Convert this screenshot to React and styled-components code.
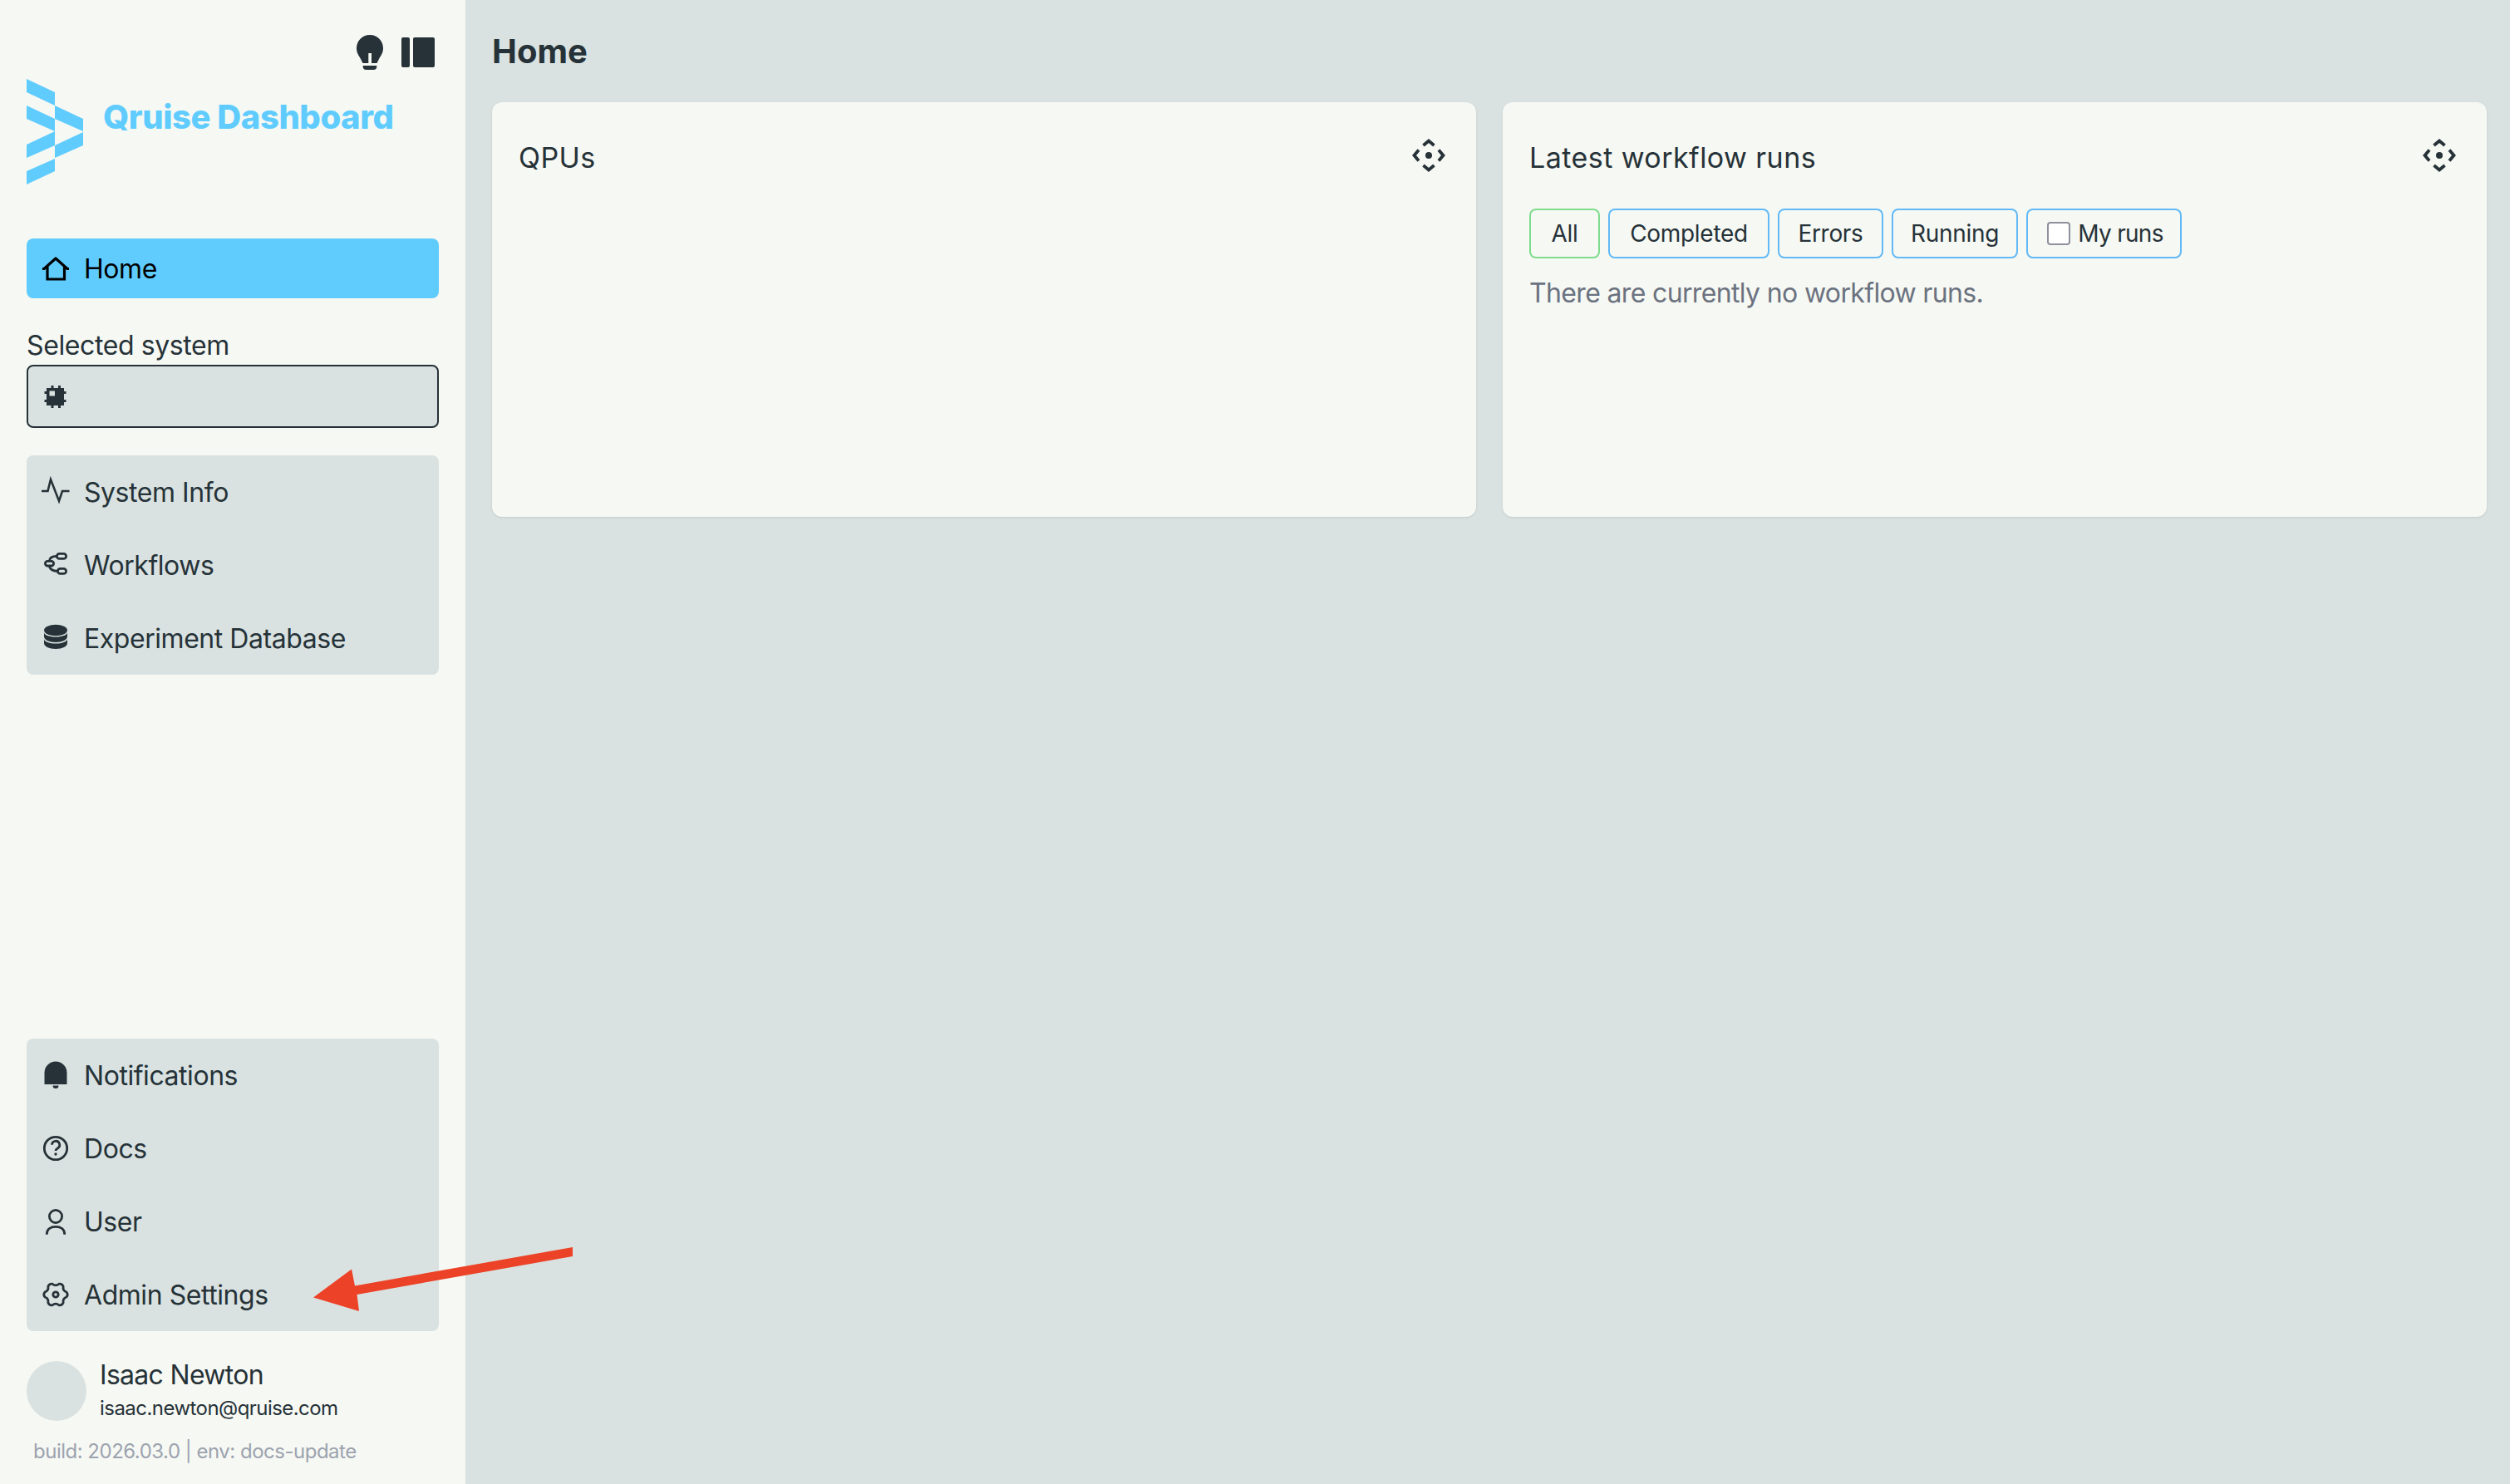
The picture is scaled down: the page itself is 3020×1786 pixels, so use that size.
import React from 'react'
import styled, { createGlobalStyle } from 'styled-components'

const ink = '#263238'
const sky = '#60ccfe'
const mist = '#d9e2e1'
const paper = '#f6f8f3'

const GlobalStyle = createGlobalStyle`
  html, body {
    margin: 0;
    padding: 0;
    background: ${mist};
  }
  body {
    font-family: Inter, 'Liberation Sans', sans-serif;
    color: ${ink};
  }
  * {
    box-sizing: border-box;
  }
`

const Page = styled.div`
  position: relative;
  display: flex;
  width: 3020px;
  height: 1786px;
  overflow: hidden;
`

const Sidebar = styled.aside`
  display: flex;
  flex-direction: column;
  flex: 0 0 560px;
  padding: 42px 32px 23px;
  background: ${paper};
`

const TopIcons = styled.div`
  display: flex;
  justify-content: flex-end;
  align-items: center;
  gap: 22px;
  height: 42px;
  padding-right: 5px;
`

const Brand = styled.div`
  display: flex;
  gap: 24px;
  margin-top: 11px;
`

const BrandName = styled.span`
  margin-top: 22px;
  font-size: 40px;
  line-height: 48px;
  font-weight: 800;
  letter-spacing: -0.45px;
  color: ${sky};
`

const NavRow = styled.div`
  display: flex;
  align-items: center;
  gap: 14px;
  height: ${(p) => (p.$active ? 72 : 88)}px;
  padding-left: 15px;
  font-size: 32px;
  letter-spacing: -0.45px;
  color: ${(p) => (p.$active ? '#000' : ink)};
  background: ${(p) => (p.$active ? sky : 'transparent')};
  border-radius: ${(p) => (p.$active ? '8px' : '0')};
`

const HomeSlot = styled.div`
  margin-top: 65px;
`

const Label = styled.div`
  margin-top: 37px;
  font-size: 32px;
  line-height: 40px;
  letter-spacing: -0.4px;
`

const SystemSelect = styled.div`
  display: flex;
  align-items: center;
  height: 76px;
  margin-top: 3px;
  padding-left: 15px;
  background: ${mist};
  border: 2px solid ${ink};
  border-radius: 8px;
  svg {
    margin-left: -2px;
  }
`

const NavGroup = styled.nav`
  margin-top: ${(p) => (p.$bottom ? 'auto' : '33px')};
  background: ${mist};
  border-radius: 8px;
`

const UserCard = styled.div`
  display: flex;
  gap: 16px;
  margin-top: 36px;
`

const Avatar = styled.div`
  flex: 0 0 72px;
  height: 72px;
  border-radius: 50%;
  background: ${mist};
`

const UserName = styled.div`
  font-size: 32px;
  line-height: 40px;
  margin-top: -3px;
  letter-spacing: -0.7px;
`

const UserMail = styled.div`
  margin-top: 1px;
  font-size: 24px;
  line-height: 38px;
  letter-spacing: -0.55px;
`

const BuildInfo = styled.div`
  margin-top: 17px;
  padding-left: 8px;
  font-size: 24px;
  line-height: 32px;
  letter-spacing: -0.5px;
  color: #9ca3af;
`

const Main = styled.main`
  flex: 1;
  padding: 38px 28px 0 32px;
`

const PageTitle = styled.h1`
  margin: 0 0 37px;
  font-size: 40px;
  line-height: 48px;
  font-weight: 700;
`

const Cards = styled.div`
  display: grid;
  grid-template-columns: 1fr 1fr;
  gap: 32px;
`

const Card = styled.section`
  height: 499px;
  padding: 44px 32px 0;
  background: ${paper};
  border-radius: 12px;
  box-shadow: 0 1px 3px rgba(0, 0, 0, 0.1);
`

const CardHead = styled.div`
  display: flex;
  justify-content: space-between;
  align-items: center;
  height: 44px;
  padding-right: 5px;
  svg {
    margin-top: -4px;
  }
`

const CardTitle = styled.h2`
  margin: 0;
  font-size: 34px;
  font-weight: 400;
  letter-spacing: 0.45px;
`

const Filters = styled.div`
  display: flex;
  gap: 10px;
  margin-top: 40px;
`

const Filter = styled.button`
  display: flex;
  justify-content: center;
  align-items: center;
  gap: 9px;
  width: ${(p) => p.$w}px;
  height: 60px;
  padding: 0;
  font: inherit;
  font-size: 28px;
  letter-spacing: -0.3px;
  color: ${ink};
  background: transparent;
  border: 2px solid ${(p) => (p.$active ? '#7fdc8d' : '#62b9f5')};
  border-radius: 8px;
`

const Check = styled.span`
  width: 28px;
  height: 28px;
  margin-left: 3px;
  background: #fff;
  border: 2px solid #8f8f9d;
  border-radius: 4px;
`

const MyRuns = styled.span`
  letter-spacing: -0.7px;
`

const Empty = styled.p`
  margin: 18px 0 0;
  font-size: 32px;
  line-height: 48px;
  letter-spacing: -0.65px;
  color: #6b7280;
`

const Pointer = styled.svg`
  position: absolute;
  left: 370px;
  top: 1495px;
`

const Icon = ({ children, fill = 'none', stroke = 'currentColor', width = 3 }) => (
  <svg width='40' height='40' viewBox='0 0 40 40' fill={fill} stroke={stroke} strokeWidth={width} style={{ flex: 'none' }}>
    {children}
  </svg>
)

const HomeIcon = () => (
  <Icon width={3.2}>
    <path d='M4 20.5h2L20 8l14 12.5h2' strokeLinejoin='round' />
    <path d='M10 18v15h20.5V18' />
  </Icon>
)

const ChipIcon = () => (
  <Icon fill={ink} stroke='none'>
    <path d='M9 10h21v21H9z' />
    <path d='M14.5 7h3v3h-3zM23 7h3v3h-3zM14.5 31h3v3h-3zM23 31h3v3h-3zM6.5 14h2.5v3H6.5zM30 14h2.5v3H30zM6.5 24h2.5v3H6.5zM30 24h2.5v3H30z' />
    <path d='M12.5 13.5H19v6h-6.5z' fill={mist} />
  </Icon>
)

const ActivityIcon = () => (
  <Icon width={2.6}>
    <path d='M3 19h7.5L14 5l10 26 4-12h8.5' />
  </Icon>
)

const FlowIcon = () => (
  <Icon width={2.8}>
    <rect x='7.4' y='15.4' width='10.2' height='5.6' rx='2.8' />
    <rect x='21.4' y='6.4' width='11.2' height='6' rx='3' />
    <rect x='22.4' y='24.4' width='10.2' height='6' rx='3' />
    <path d='M12.5 15.4C12.5 11 16 9.4 21.4 9.4M12.5 21c0 4 4.5 6.4 9.9 6.4' />
  </Icon>
)

const DatabaseIcon = () => (
  <Icon fill={ink} stroke='none'>
    <ellipse cx='20' cy='10.5' rx='14' ry='6.8' />
    <path d='M6 13v5c0 4 6 7 14 7s14-3 14-7v-5c0 3.500-7 5.500-14 5.500S6 16.500 6 13z' />
    <path d='M6 21v5c0 4 6 7 14 7s14-3 14-7v-5c0 3.500-7 5.500-14 5.500S6 24.500 6 21z' />
  </Icon>
)

const BellIcon = () => (
  <Icon fill={ink} stroke='none'>
    <path d='M6.500 31V17a13.500 13.500 0 0 1 27 0v14z' />
    <path d='M16.500 32.500h7a3.500 3.500 0 0 1-7 0z' />
  </Icon>
)

const HelpIcon = () => (
  <Icon width={2.8}>
    <circle cx='20' cy='20' r='13.700' />
    <path d='M15.500 15.800a4.600 4.600 0 1 1 6.800 4.100c-1.400.8-2.300 1.500-2.300 3.100' />
    <circle cx='20' cy='27' r='1.700' fill={ink} stroke='none' />
  </Icon>
)

const UserIcon = () => (
  <Icon width={2.8}>
    <circle cx='20' cy='14' r='7.600' />
    <path d='M9.200 35.700C9.200 29 14 26.300 20 26.300s10.800 2.700 10.800 9.400' />
  </Icon>
)

// six lobes, one every 60deg
const gearPath = () => {
  const at = (deg, r) => {
    const a = (deg * Math.PI) / 180
    return `${(20 + r * Math.cos(a)).toFixed(2)} ${(20 + r * Math.sin(a)).toFixed(2)}`
  }
  let d = `M${at(-13, 13.4)}`
  for (let i = 0; i < 6; i++) {
    const a = i * 60
    d += ` Q${at(a, 15.4)} ${at(a + 13, 13.4)} Q${at(a + 30, 9.4)} ${at(a + 47, 13.4)}`
  }
  return d + 'Z'
}

const GearIcon = () => (
  <Icon width={2.8}>
    <path d={gearPath()} strokeLinejoin='round' />
    <circle cx='20' cy='20' r='3.200' />
  </Icon>
)

const MoveIcon = () => (
  <Icon width={3.8}>
    <path d='M13.500 8L20 2.500 26.500 8M13.500 32l6.500 5.500L26.500 32M8 13.500L2.500 20 8 26.500M32 13.500l5.500 6.500L32 26.500' />
    <circle cx='20' cy='20' r='4' fill={ink} stroke='none' />
  </Icon>
)

const Logo = () => (
  <svg width='68' height='127' viewBox='32 95 68 127' fill={sky}>
    <path d='M32 95l34 16v16l-34-16z' />
    <path d='M32 127l34 16v15l-34-15z' />
    <path d='M66 127l34 16v15l-34-15z' />
    <path d='M66 158l-34 16v16l34-15z' />
    <path d='M100 159l-34 16v15l34-15z' />
    <path d='M66 191l-34 15v16l34-16z' />
  </svg>
)

const Bulb = () => (
  <svg width='32' height='42' viewBox='0 0 32 42' fill={ink}>
    <path d='M16 0C7 0 0 7 0 16c0 6 3 9 5 13l2.500 5h6.800V22H18v12h6.500l2.500-5c2-4 5-7 5-13 0-9-7-16-16-16z' />
    <path d='M7.700 37h16.600v1a4 4 0 0 1-4 4h-8.600a4 4 0 0 1-4-4z' />
  </svg>
)

const PanelIcon = () => (
  <svg width='40' height='36' viewBox='0 0 40 36' fill={ink}>
    <rect width='10' height='36' rx='2' />
    <rect x='14' width='26' height='36' rx='2' />
  </svg>
)

const topNav = [
  { label: 'System Info', icon: <ActivityIcon /> },
  { label: 'Workflows', icon: <FlowIcon /> },
  { label: 'Experiment Database', icon: <DatabaseIcon /> },
]

const bottomNav = [
  { label: 'Notifications', icon: <BellIcon /> },
  { label: 'Docs', icon: <HelpIcon /> },
  { label: 'User', icon: <UserIcon /> },
  { label: 'Admin Settings', icon: <GearIcon /> },
]

const App = () => {
  return (
    <Page>
      <GlobalStyle />
      <Sidebar>
        <TopIcons>
          <Bulb />
          <PanelIcon />
        </TopIcons>
        <Brand>
          <Logo />
          <BrandName>Qruise Dashboard</BrandName>
        </Brand>
        <HomeSlot>
          <NavRow $active>
            <HomeIcon />
            Home
          </NavRow>
        </HomeSlot>
        <Label>Selected system</Label>
        <SystemSelect>
          <ChipIcon />
        </SystemSelect>
        <NavGroup>
          {topNav.map((item) => (
            <NavRow key={item.label}>
              {item.icon}
              {item.label}
            </NavRow>
          ))}
        </NavGroup>
        <NavGroup $bottom>
          {bottomNav.map((item) => (
            <NavRow key={item.label}>
              {item.icon}
              {item.label}
            </NavRow>
          ))}
        </NavGroup>
        <UserCard>
          <Avatar />
          <div>
            <UserName>Isaac Newton</UserName>
            <UserMail>isaac.newton@qruise.com</UserMail>
          </div>
        </UserCard>
        <BuildInfo>build: 2026.03.0 | env: docs-update</BuildInfo>
      </Sidebar>
      <Main>
        <PageTitle>Home</PageTitle>
        <Cards>
          <Card>
            <CardHead>
              <CardTitle>QPUs</CardTitle>
              <MoveIcon />
            </CardHead>
          </Card>
          <Card>
            <CardHead>
              <CardTitle>Latest workflow runs</CardTitle>
              <MoveIcon />
            </CardHead>
            <Filters>
              <Filter $active $w={85}>All</Filter>
              <Filter $w={194}>Completed</Filter>
              <Filter $w={127}>Errors</Filter>
              <Filter $w={152}>Running</Filter>
              <Filter $w={187}>
                <Check />
                <MyRuns>My runs</MyRuns>
              </Filter>
            </Filters>
            <Empty>There are currently no workflow runs.</Empty>
          </Card>
        </Cards>
      </Main>
      <Pointer width='325' height='90' viewBox='370 1495 325 90'>
        <path fill='#ec4227' d='M377 1561.500L423 1527.500L427 1547.400L689 1501L689 1512L429.500 1558L432 1578Z' />
      </Pointer>
    </Page>
  )
}

export default App
